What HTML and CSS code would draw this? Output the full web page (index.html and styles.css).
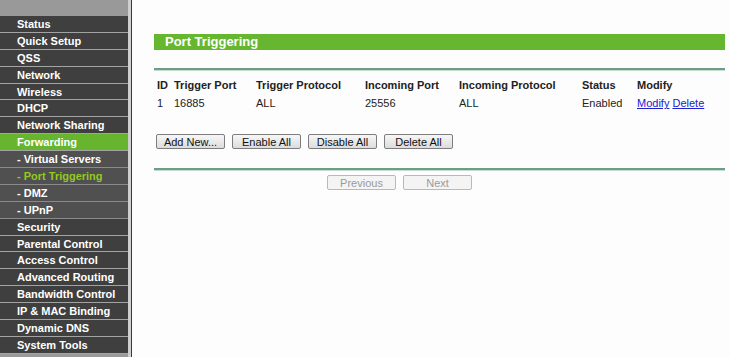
FILE: index.html
```html
<!DOCTYPE html>
<html lang="en">

<head>
    <meta charset="UTF-8">
    <title>Port Triggering</title>
    <link rel="stylesheet" href="styles.css">
</head>

<body>
    <!-- Left menu -->
    <div class="menu">
        <div class="menu-top"></div>
        <div class="item">Status</div>
        <div class="item">Quick Setup</div>
        <div class="item">QSS</div>
        <div class="item">Network</div>
        <div class="item">Wireless</div>
        <div class="item">DHCP</div>
        <div class="item">Network Sharing</div>
        <div class="item active">Forwarding</div>
        <div class="item sub">- Virtual Servers</div>
        <div class="item sub current">- Port Triggering</div>
        <div class="item sub">- DMZ</div>
        <div class="item sub">- UPnP</div>
        <div class="item">Security</div>
        <div class="item">Parental Control</div>
        <div class="item">Access Control</div>
        <div class="item">Advanced Routing</div>
        <div class="item">Bandwidth Control</div>
        <div class="item">IP &amp; MAC Binding</div>
        <div class="item">Dynamic DNS</div>
        <div class="item">System Tools</div>
    </div>

    <!-- Main content -->
    <div class="main">
        <div class="title-bar">Port Triggering</div>
        <div class="rule"></div>

        <table class="rules-table">
            <tr>
                <th class="c-id">ID</th>
                <th class="c-tport">Trigger Port</th>
                <th class="c-tproto">Trigger Protocol</th>
                <th class="c-iport">Incoming Port</th>
                <th class="c-iproto">Incoming Protocol</th>
                <th class="c-status">Status</th>
                <th>Modify</th>
            </tr>
            <tr>
                <td>1</td>
                <td>16885</td>
                <td>ALL</td>
                <td>25556</td>
                <td>ALL</td>
                <td>Enabled</td>
                <td><a href="#">Modify</a> <a href="#">Delete</a></td>
            </tr>
        </table>

        <div class="actions">
            <button class="btn">Add New...</button>
            <button class="btn">Enable All</button>
            <button class="btn">Disable All</button>
            <button class="btn">Delete All</button>
        </div>

        <div class="rule"></div>

        <div class="pager">
            <button class="btn" disabled>Previous</button>
            <button class="btn" disabled>Next</button>
        </div>
    </div>
</body>

</html>
```

FILE: styles.css
```css
body {
    margin: 0;
    display: flex;
    height: 357px;
    overflow: hidden;
    font-family: "Liberation Sans", Arial, sans-serif;
    font-size: 11px;
    color: #222;
    background-color: #fdfdfd;
}

/* Left menu */
.menu {
    width: 128px;
    flex-shrink: 0;
    background-color: #9a9a9a;
    border-right: 3px solid #cfcfcf;
    box-shadow: 1px 0 0 #3a3a3a;
    margin-right: 1px;
}

.menu-top {
    height: 16px;
    background-color: #999;
}

.item {
    height: 15.9px;
    line-height: 16px;
    padding-left: 17px;
    background-color: #3f3f3f;
    border-bottom: 1px solid #a3a3a3;
    color: #fff;
    font-weight: bold;
    white-space: nowrap;
}

.item.sub {
    background-color: #505050;
    border-bottom-color: #8a8a8a;
}

.item.active {
    background-color: #67b52f;
    border-bottom-color: #a3a3a3;
}

.item.current {
    color: #94c91e;
}

/* Main area */
.main {
    flex: 1;
    padding: 34px 5px 0 22px;
}

.title-bar {
    height: 16px;
    line-height: 16px;
    background-color: #66b72f;
    color: #fff;
    font-size: 13px;
    font-weight: bold;
    padding-left: 11px;
}

.rule {
    height: 2px;
    margin-top: 18px;
    background-color: #6b9e84;
    border-bottom: 1px solid #c9dcd1;
}

.rules-table {
    border-collapse: collapse;
    margin-top: 5px;
}

.rules-table th,
.rules-table td {
    height: 18px;
    padding: 0 3px;
    text-align: left;
    white-space: nowrap;
}

.rules-table th {
    font-weight: bold;
}

.c-id { width: 10px; }
.c-tport { width: 76px; }
.c-tproto { width: 103px; }
.c-iport { width: 88px; }
.c-iproto { width: 117px; }
.c-status { width: 49px; }

.rules-table a {
    color: #2020d0;
}

.actions {
    display: flex;
    gap: 7px;
    margin: 22px 0 0 2px;
}

.actions + .rule {
    margin-top: 19px;
}

.btn {
    width: 69px;
    height: 15px;
    padding: 0;
    font-family: "Liberation Sans", Arial, sans-serif;
    font-size: 11px;
    color: #111;
    border: 1px solid #7d7d7d;
    border-radius: 2px;
    background: linear-gradient(#f7f7f7, #dcdcdc);
}

.pager {
    display: flex;
    gap: 7px;
    margin: 4px 0 0 173px;
}

.pager .btn {
    color: #9a9a9a;
    border-color: #b9b9b9;
    background: #f4f4f4;
}
```
